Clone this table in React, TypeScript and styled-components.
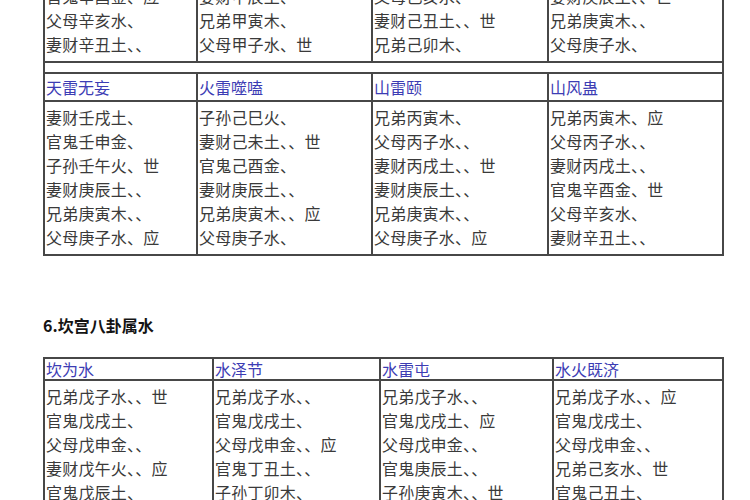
import React from "react";
import styled, { createGlobalStyle } from "styled-components";

const GlobalStyle = createGlobalStyle`
  body {
    margin: 0;
    background: #ffffff;
    font-family: "Noto Sans CJK SC", "Noto Sans", sans-serif;
  }
`;

const Page = styled.div`
  padding-left: 43px;
  margin-top: -121px;
`;

const Table = styled.table`
  border-collapse: collapse;
  table-layout: fixed;
  width: 679px;
  border: 2px solid #474747;
`;

const Col = styled.col<{ $w: number }>`
  width: ${(p) => p.$w}px;
`;

const HeadCell = styled.td<{ $h: number }>`
  height: ${(p) => p.$h}px;
  padding: 0 1px;
  border: 2px solid #474747;
  font-size: 16px;
  line-height: 20px;
  color: #3c3cb4;
  vertical-align: middle;
  white-space: nowrap;
`;

const DataCell = styled.td`
  padding: 3px 1px 5px;
  border: 2px solid #474747;
  font-size: 16px;
  line-height: 24px;
  letter-spacing: 0.2px;
  color: #3a3a3a;
  vertical-align: top;
  white-space: nowrap;
`;

const SpacerCell = styled.td`
  height: 9px;
  padding: 0;
  border: 2px solid #474747;
`;

const Line = styled.div``;

const Title = styled.h3`
  margin: 58px 0 21px;
  font-size: 16px;
  line-height: 22px;
  font-weight: bold;
  color: #141414;
`;

type Gua = { name: string; lines: string[] };

const xunTop: Gua[] = [
  {
    name: "巽为风",
    lines: ["兄弟辛卯木、世", "子孙辛巳火、", "妻财辛未土、", "官鬼辛酉金、应", "父母辛亥水、", "妻财辛丑土、、"],
  },
  {
    name: "风天小畜",
    lines: ["兄弟辛卯木、", "子孙辛巳火、", "妻财辛未土、应", "妻财甲辰土、", "兄弟甲寅木、", "父母甲子水、世"],
  },
  {
    name: "风火家人",
    lines: ["兄弟辛卯木、", "子孙辛巳火、应", "妻财辛未土、", "父母己亥水、", "妻财己丑土、、世", "兄弟己卯木、"],
  },
  {
    name: "风雷益",
    lines: ["兄弟辛卯木、应", "子孙辛巳火、", "妻财辛未土、", "妻财庚辰土、、世", "兄弟庚寅木、、", "父母庚子水、"],
  },
];

const xunBottom: Gua[] = [
  {
    name: "天雷无妄",
    lines: ["妻财壬戌土、", "官鬼壬申金、", "子孙壬午火、世", "妻财庚辰土、、", "兄弟庚寅木、、", "父母庚子水、应"],
  },
  {
    name: "火雷噬嗑",
    lines: ["子孙己巳火、", "妻财己未土、、世", "官鬼己酉金、", "妻财庚辰土、、", "兄弟庚寅木、、应", "父母庚子水、"],
  },
  {
    name: "山雷颐",
    lines: ["兄弟丙寅木、", "父母丙子水、、", "妻财丙戌土、、世", "妻财庚辰土、、", "兄弟庚寅木、、", "父母庚子水、应"],
  },
  {
    name: "山风蛊",
    lines: ["兄弟丙寅木、应", "父母丙子水、、", "妻财丙戌土、、", "官鬼辛酉金、世", "父母辛亥水、", "妻财辛丑土、、"],
  },
];

const kanTop: Gua[] = [
  {
    name: "坎为水",
    lines: ["兄弟戊子水、、世", "官鬼戊戌土、", "父母戊申金、、", "妻财戊午火、、应", "官鬼戊辰土、", "子孙戊寅木、"],
  },
  {
    name: "水泽节",
    lines: ["兄弟戊子水、、", "官鬼戊戌土、", "父母戊申金、、应", "官鬼丁丑土、、", "子孙丁卯木、", "妻财丁巳火、世"],
  },
  {
    name: "水雷屯",
    lines: ["兄弟戊子水、、", "官鬼戊戌土、应", "父母戊申金、、", "官鬼庚辰土、、", "子孙庚寅木、、世", "兄弟庚子水、"],
  },
  {
    name: "水火既济",
    lines: ["兄弟戊子水、、应", "官鬼戊戌土、", "父母戊申金、、", "兄弟己亥水、世", "官鬼己丑土、", "子孙己卯木、"],
  },
];

const GuaRows = ({ row, headH }: { row: Gua[]; headH: number }) => (
  <>
    <tr>
      {row.map((g) => (
        <HeadCell key={g.name} $h={headH}>
          {g.name}
        </HeadCell>
      ))}
    </tr>
    <tr>
      {row.map((g) => (
        <DataCell key={g.name}>
          {g.lines.map((l, i) => (
            <Line key={i}>{l}</Line>
          ))}
        </DataCell>
      ))}
    </tr>
  </>
);

export default function App() {
  return (
    <Page>
      <GlobalStyle />
      <Table>
        <colgroup>
          <Col $w={153} />
          <Col $w={175} />
          <Col $w={176} />
          <Col $w={175} />
        </colgroup>
        <tbody>
          <GuaRows row={xunTop} headH={26} />
          <tr>
            <SpacerCell colSpan={4} />
          </tr>
          <GuaRows row={xunBottom} headH={26} />
        </tbody>
      </Table>

      <Title>6.坎宫八卦属水</Title>

      <Table>
        <colgroup>
          <Col $w={169} />
          <Col $w={167} />
          <Col $w={173} />
          <Col $w={170} />
        </colgroup>
        <tbody>
          <GuaRows row={kanTop} headH={20} />
        </tbody>
      </Table>
    </Page>
  );
}
